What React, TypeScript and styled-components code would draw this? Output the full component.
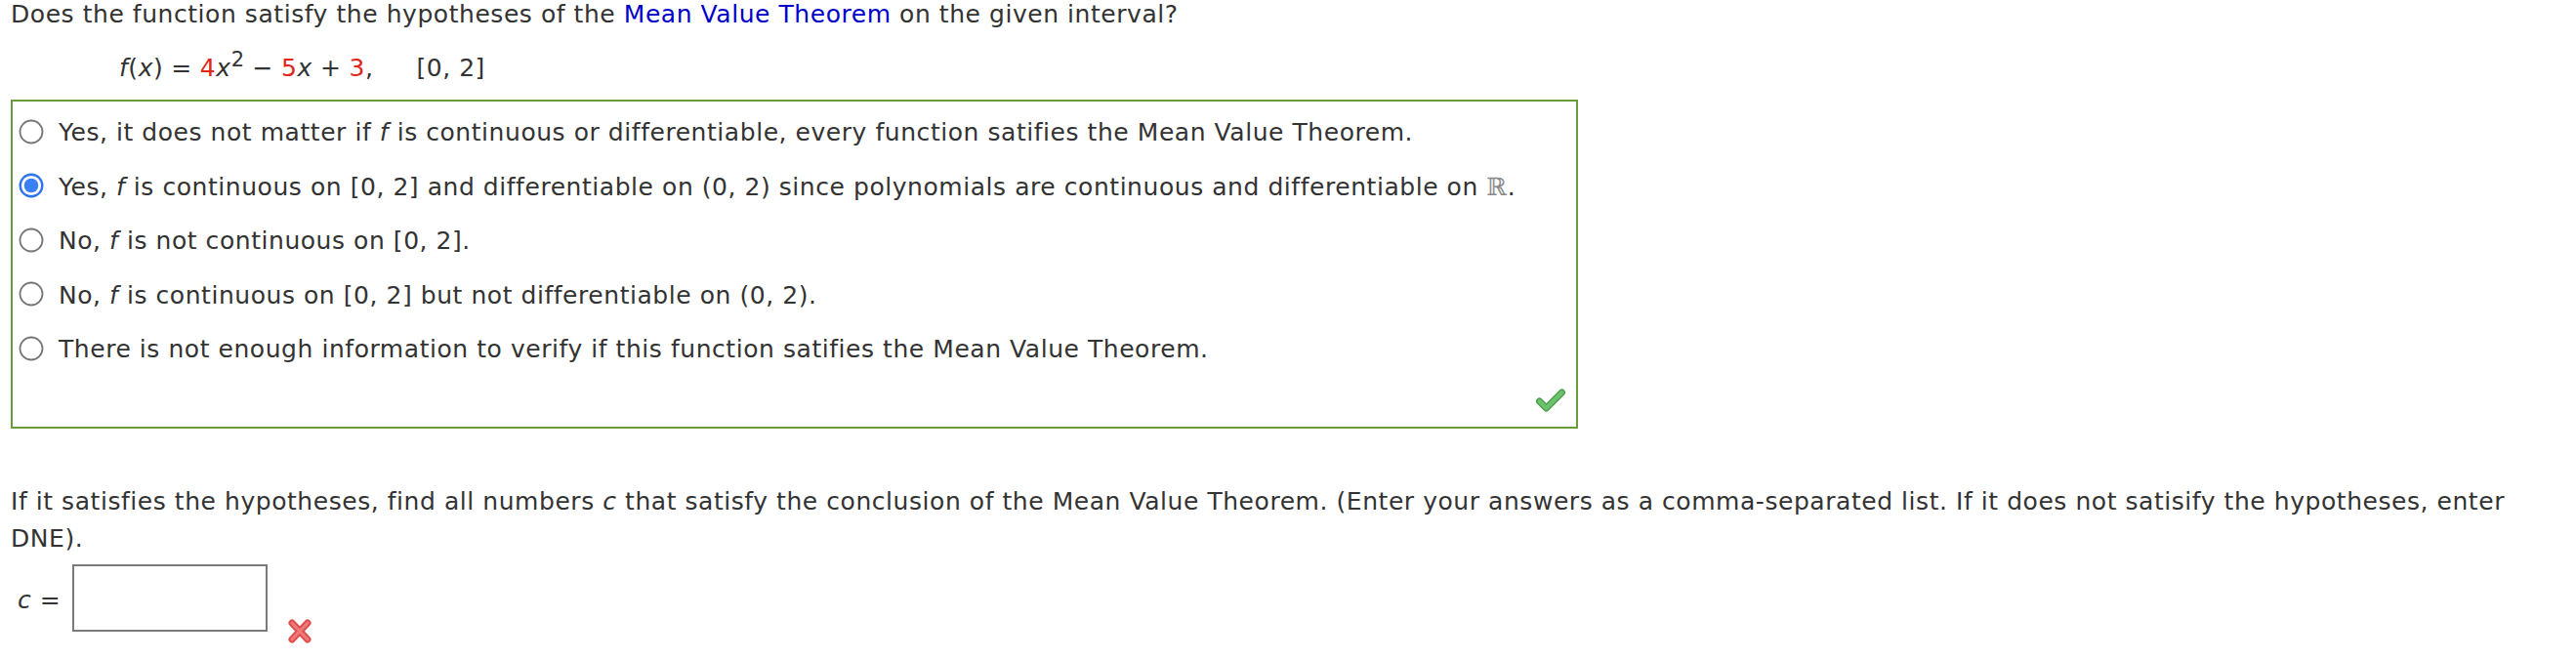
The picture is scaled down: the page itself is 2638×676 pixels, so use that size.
import React from "react";
import styled, { createGlobalStyle } from "styled-components";

const GlobalStyle = createGlobalStyle`
  html, body {
    margin: 0;
    padding: 0;
    background: #ffffff;
  }
  body {
    font-family: "DejaVu Sans", Verdana, sans-serif;
    font-size: 25px;
    letter-spacing: 0.55px;
    color: #333333;
  }
`;

const Page = styled.div`
  padding: 1px 11px 0 11px;
`;

const Question = styled.p`
  margin: 0;
  line-height: 28px;
`;

const Link = styled.span`
  color: #0000c8;
`;

const Formula = styled.div`
  margin: 27px 0 0 111px;
  line-height: 28px;
  white-space: nowrap;
`;

const Var = styled.i`
  font-style: italic;
`;

const Coef = styled.span`
  color: #e3261b;
`;

const Sup = styled.span`
  font-size: 21px;
  position: relative;
  top: -10px;
  line-height: 0;
`;

const Op = styled.span`
  margin: 0 8px;
`;

const Interval = styled.span`
  margin-left: 44px;
`;

const ChoiceBox = styled.div`
  margin-top: 18px;
  width: 1605px;
  height: 337px;
  box-sizing: border-box;
  border: 2px solid #6a9b3d;
  padding-top: 3px;
  display: flex;
  flex-direction: column;
`;

const Choice = styled.label`
  display: flex;
  align-items: center;
  height: 55.5px;
  padding-left: 6px;
  gap: 15px;
  line-height: 28px;
`;

const ChoiceText = styled.span`
  padding-top: 3px;
`;

const Reals = styled.span`
  font-family: "DejaVu Serif", serif;
  color: #8a8a8a;
`;

const BoxFooter = styled.div`
  flex: 1;
  display: flex;
  justify-content: flex-end;
  align-items: flex-end;
  padding: 0 10px 14px 0;
`;

const Prompt = styled.p`
  margin: 56px 0 0 0;
  line-height: 38px;
`;

const AnswerRow = styled.div`
  display: flex;
  align-items: flex-start;
  margin-top: 7px;
`;

const AnswerLabel = styled.span`
  padding: 23px 0 0 7px;
  line-height: 28px;
  margin-right: 12px;
  white-space: nowrap;
`;

const AnswerInput = styled.div`
  width: 200px;
  height: 69px;
  box-sizing: border-box;
  border: 2px solid #7b7b7b;
  background: #fff;
`;

const WrongMark = styled.span`
  margin: 55px 0 0 20px;
  display: inline-flex;
`;

const Radio: React.FC<{ checked?: boolean }> = ({ checked }) =>
  checked ? (
    <svg width="26" height="26" viewBox="0 0 26 26">
      <circle cx="13" cy="13" r="11.3" fill="#fff" stroke="#2f74ed" strokeWidth="2.4" />
      <circle cx="13" cy="13" r="7.3" fill="#3a7ff3" />
    </svg>
  ) : (
    <svg width="26" height="26" viewBox="0 0 26 26">
      <circle cx="13" cy="13" r="11.5" fill="#fff" stroke="#767676" strokeWidth="1.8" />
    </svg>
  );

const CheckMark = () => (
  <svg width="32" height="26" viewBox="0 0 32 26">
    <path d="M4.5 14 L11.5 21 L27.5 5" fill="none" stroke="#4f9f4f" strokeWidth="7" strokeLinecap="round" strokeLinejoin="round" />
    <path d="M4.5 14 L11.5 21 L27.5 5" fill="none" stroke="#6cc36c" strokeWidth="4" strokeLinecap="round" strokeLinejoin="round" />
  </svg>
);

const XMark = () => (
  <svg width="26" height="27" viewBox="0 0 26 27">
    <g fill="none" strokeLinecap="round">
      <path d="M5 5 L21 22 M21 5 L5 22" stroke="#de4f4f" strokeWidth="7" />
      <path d="M5 5 L21 22 M21 5 L5 22" stroke="#f07a7a" strokeWidth="3" />
    </g>
  </svg>
);

const choices: { key: string; checked?: boolean; content: React.ReactNode }[] = [
  {
    key: "a",
    content: (
      <>
        Yes, it does not matter if <Var>f</Var> is continuous or differentiable, every function satifies the Mean Value Theorem.
      </>
    ),
  },
  {
    key: "b",
    checked: true,
    content: (
      <>
        Yes, <Var>f</Var> is continuous on [0, 2] and differentiable on (0, 2) since polynomials are continuous and differentiable on <Reals>ℝ</Reals>.
      </>
    ),
  },
  {
    key: "c",
    content: (
      <>
        No, <Var>f</Var> is not continuous on [0, 2].
      </>
    ),
  },
  {
    key: "d",
    content: (
      <>
        No, <Var>f</Var> is continuous on [0, 2] but not differentiable on (0, 2).
      </>
    ),
  },
  {
    key: "e",
    content: <>There is not enough information to verify if this function satifies the Mean Value Theorem.</>,
  },
];

export default function App() {
  return (
    <>
      <GlobalStyle />
      <Page>
        <Question>
          Does the function satisfy the hypotheses of the <Link>Mean Value Theorem</Link> on the given interval?
        </Question>
        <Formula>
          <Var>f</Var>(<Var>x</Var>)<Op>=</Op>
          <Coef>4</Coef>
          <Var>x</Var>
          <Sup>2</Sup>
          <Op>−</Op>
          <Coef>5</Coef>
          <Var>x</Var>
          <Op>+</Op>
          <Coef>3</Coef>,<Interval>[0, 2]</Interval>
        </Formula>
        <ChoiceBox>
          {choices.map((c) => (
            <Choice key={c.key}>
              <Radio checked={c.checked} />
              <ChoiceText>{c.content}</ChoiceText>
            </Choice>
          ))}
          <BoxFooter>
            <CheckMark />
          </BoxFooter>
        </ChoiceBox>
        <Prompt>
          If it satisfies the hypotheses, find all numbers <Var>c</Var> that satisfy the conclusion of the Mean Value Theorem. (Enter your answers as a comma-separated list. If it does not satisify the hypotheses, enter DNE).
        </Prompt>
        <AnswerRow>
          <AnswerLabel>
            <Var>c</Var> =
          </AnswerLabel>
          <AnswerInput />
          <WrongMark>
            <XMark />
          </WrongMark>
        </AnswerRow>
      </Page>
    </>
  );
}
